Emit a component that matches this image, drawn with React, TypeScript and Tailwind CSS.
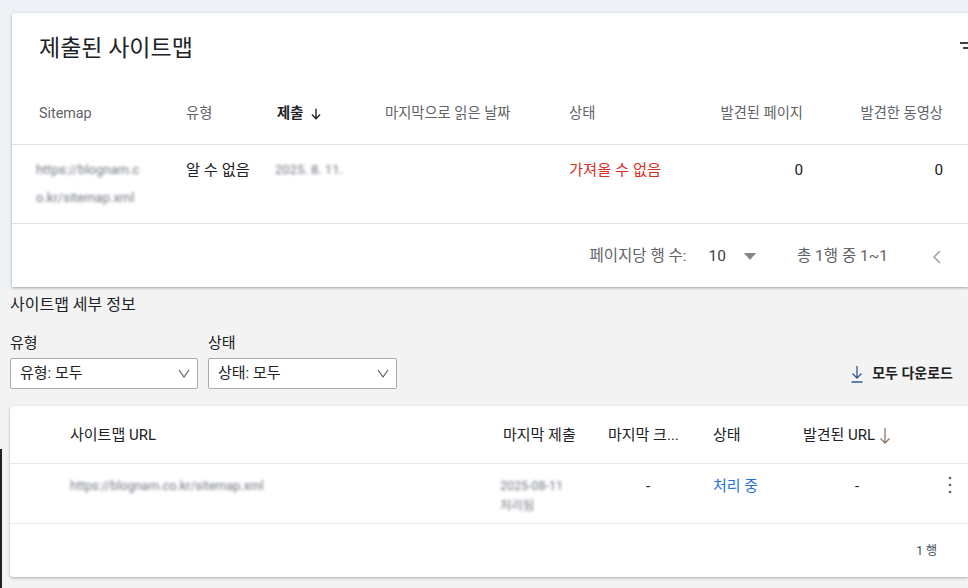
import React from "react";

const font = { fontFamily: 'Roboto, "Noto Sans CJK KR", "Noto Sans", sans-serif' };

function Blur({ children, className = "" }: { children: React.ReactNode; className?: string }) {
  return (
    <span className={"inline-block blur-[1.4px] text-[#6f7580] select-none " + className}>{children}</span>
  );
}

export default function App() {
  return (
    <div className="relative w-[968px] h-[588px] overflow-hidden bg-[#f3f3f3] text-[#202124]" style={font}>
      {/* top card */}
      <div className="bg-[#eef2f7] pt-[13px]">
        <div className="ml-[12px] bg-white rounded-tl-[3px] shadow-[0_1px_3px_rgba(0,0,0,0.35)]">
          <div className="h-[68px] flex items-center justify-between pl-[27px] pt-[3px]">
            <div className="text-[23px] leading-[30px] text-[#202124]">제출된 사이트맵</div>
            <div className="w-[8px] h-[24px] overflow-hidden self-start mt-[22px]">
              <svg width="24" height="24" viewBox="0 0 24 24">
                <rect x="0" y="4" width="24" height="2" fill="#3c4043" />
                <rect x="3" y="9" width="18" height="2" fill="#3c4043" />
              </svg>
            </div>
          </div>
          <div className="grid grid-cols-[147px_91px_108px_184px_140px_94px_140px] pl-[27px] h-[64px] items-center pt-[2px] text-[14.3px] text-[#5f6368] border-b border-[#e0e0e0]">
            <div>Sitemap</div>
            <div>유형</div>
            <div className="flex items-center gap-[6px] font-bold text-[#202124]">
              제출
              <svg width="14" height="14" viewBox="0 0 24 24" fill="none" stroke="#202124" strokeWidth="2.4">
                <path d="M12 3v17M5 13l7 7 7-7" />
              </svg>
            </div>
            <div>마지막으로 읽은 날짜</div>
            <div>상태</div>
            <div className="text-right">발견된 페이지</div>
            <div className="text-right">발견한 동영상</div>
          </div>
          <div className="grid grid-cols-[147px_91px_108px_184px_140px_94px_140px] pl-[27px] h-[79px] pt-[11px] text-[15.3px] leading-[28px] border-b border-[#e0e0e0]">
            <div className="text-[13px] -ml-[3px]">
              <Blur>https://blognam.c</Blur>
              <br />
              <Blur>o.kr/sitemap.xml</Blur>
            </div>
            <div>알 수 없음</div>
            <div className="text-[13px] -ml-[2px]"><Blur>2025. 8. 11.</Blur></div>
            <div></div>
            <div className="text-[#d93025]">가져올 수 없음</div>
            <div className="text-right">0</div>
            <div className="text-right">0</div>
          </div>
          <div className="h-[63px] flex items-center justify-end text-[15.5px] text-[#5f6368] pr-[26px] pt-[2px]">
            <span>페이지당 행 수:</span>
            <span className="ml-[22px] text-[#3c4043]">10</span>
            <svg className="ml-[18px]" width="12" height="8" viewBox="0 0 12 8">
              <path d="M0 0h12L6 7z" fill="#80868b" />
            </svg>
            <span className="ml-[41px]">총 1행 중 1~1</span>
            <svg className="ml-[44px]" width="10" height="14" viewBox="0 0 10 14" fill="none" stroke="#a0a4a8" strokeWidth="1.6">
              <path d="M8 1L2 7l6 6" />
            </svg>
          </div>
        </div>
      </div>

      {/* details section */}
      <div className="px-[10px]">
        <div className="mt-[8px] text-[16px] leading-[20px] text-[#202124]">사이트맵 세부 정보</div>
        <div className="mt-[18px] flex items-end">
          <div className="w-[188px]">
            <div className="text-[15px] leading-[20px]">유형</div>
            <div className="mt-[5px] h-[31px] bg-white border border-[#a8abb0] rounded-[2px] flex items-center justify-between pl-[9px] pr-[7px] text-[15px]">
              <span>유형: 모두</span>
              <svg width="12" height="9" viewBox="0 0 12 9" fill="none" stroke="#5f6368" strokeWidth="1.2">
                <path d="M1 1l5 7 5-7" />
              </svg>
            </div>
          </div>
          <div className="w-[189px] ml-[10px]">
            <div className="text-[15px] leading-[20px]">상태</div>
            <div className="mt-[5px] h-[31px] bg-white border border-[#a8abb0] rounded-[2px] flex items-center justify-between pl-[9px] pr-[7px] text-[15px]">
              <span>상태: 모두</span>
              <svg width="12" height="9" viewBox="0 0 12 9" fill="none" stroke="#5f6368" strokeWidth="1.2">
                <path d="M1 1l5 7 5-7" />
              </svg>
            </div>
          </div>
          <div className="ml-auto h-[31px] flex items-center pr-[5px] gap-[9px]">
            <svg width="12" height="18" viewBox="0 0 12 18" fill="none" stroke="#2f5b9a" strokeWidth="1.3">
              <path d="M6 1v12M1.5 8.5L6 13l4.5-4.5M0.5 17h11" />
            </svg>
            <span className="text-[14px] font-bold text-[#202124]">모두 다운로드</span>
          </div>
        </div>

        {/* second card */}
        <div className="mt-[17px] bg-white rounded-l-[3px] shadow-[0_1px_3px_rgba(0,0,0,0.3)] -mr-[10px]">
          <div className="grid grid-cols-[433px_105px_105px_90px_1fr] pl-[60px] h-[58px] items-center pt-[2px] text-[15px] text-[#202124] border-b border-[#e8e8e8]">
            <div>사이트맵 URL</div>
            <div>마지막 제출</div>
            <div>마지막 크...</div>
            <div>상태</div>
            <div className="flex items-center gap-[4px]">
              발견된 URL
              <svg width="12" height="18" viewBox="0 0 12 18" fill="none" stroke="#8a7a6a" strokeWidth="1.3">
                <path d="M6 1v15M1.5 11.5L6 16l4.5-4.5" />
              </svg>
            </div>
          </div>
          <div className="grid grid-cols-[433px_105px_105px_90px_1fr] pl-[60px] h-[60px] pt-[12px] text-[15px] leading-[20px] border-b border-[#e8e8e8]">
            <div className="text-[12.5px]"><Blur>https://blognam.co.kr/sitemap.xml</Blur></div>
            <div className="text-[12.5px] -ml-[3px]">
              <Blur>2025-08-11</Blur>
              <br />
              <Blur>처리됨</Blur>
            </div>
            <div className="pl-[38px]">-</div>
            <div className="text-[#1a73e8]">처리 중</div>
            <div className="flex justify-between pr-[16px]">
              <span className="pl-[52px]">-</span>
              <svg width="4" height="18" viewBox="0 0 4 18">
                <circle cx="2" cy="2" r="1.3" fill="#5f6368" />
                <circle cx="2" cy="9" r="1.3" fill="#5f6368" />
                <circle cx="2" cy="16" r="1.3" fill="#5f6368" />
              </svg>
            </div>
          </div>
          <div className="h-[53px] flex items-center justify-end pr-[31px] text-[12px] text-[#3c4a5c]">1 행</div>
        </div>
      </div>

      <div className="absolute left-0 top-[449px] w-[2px] h-[139px] bg-[#202124]" />
    </div>
  );
}
